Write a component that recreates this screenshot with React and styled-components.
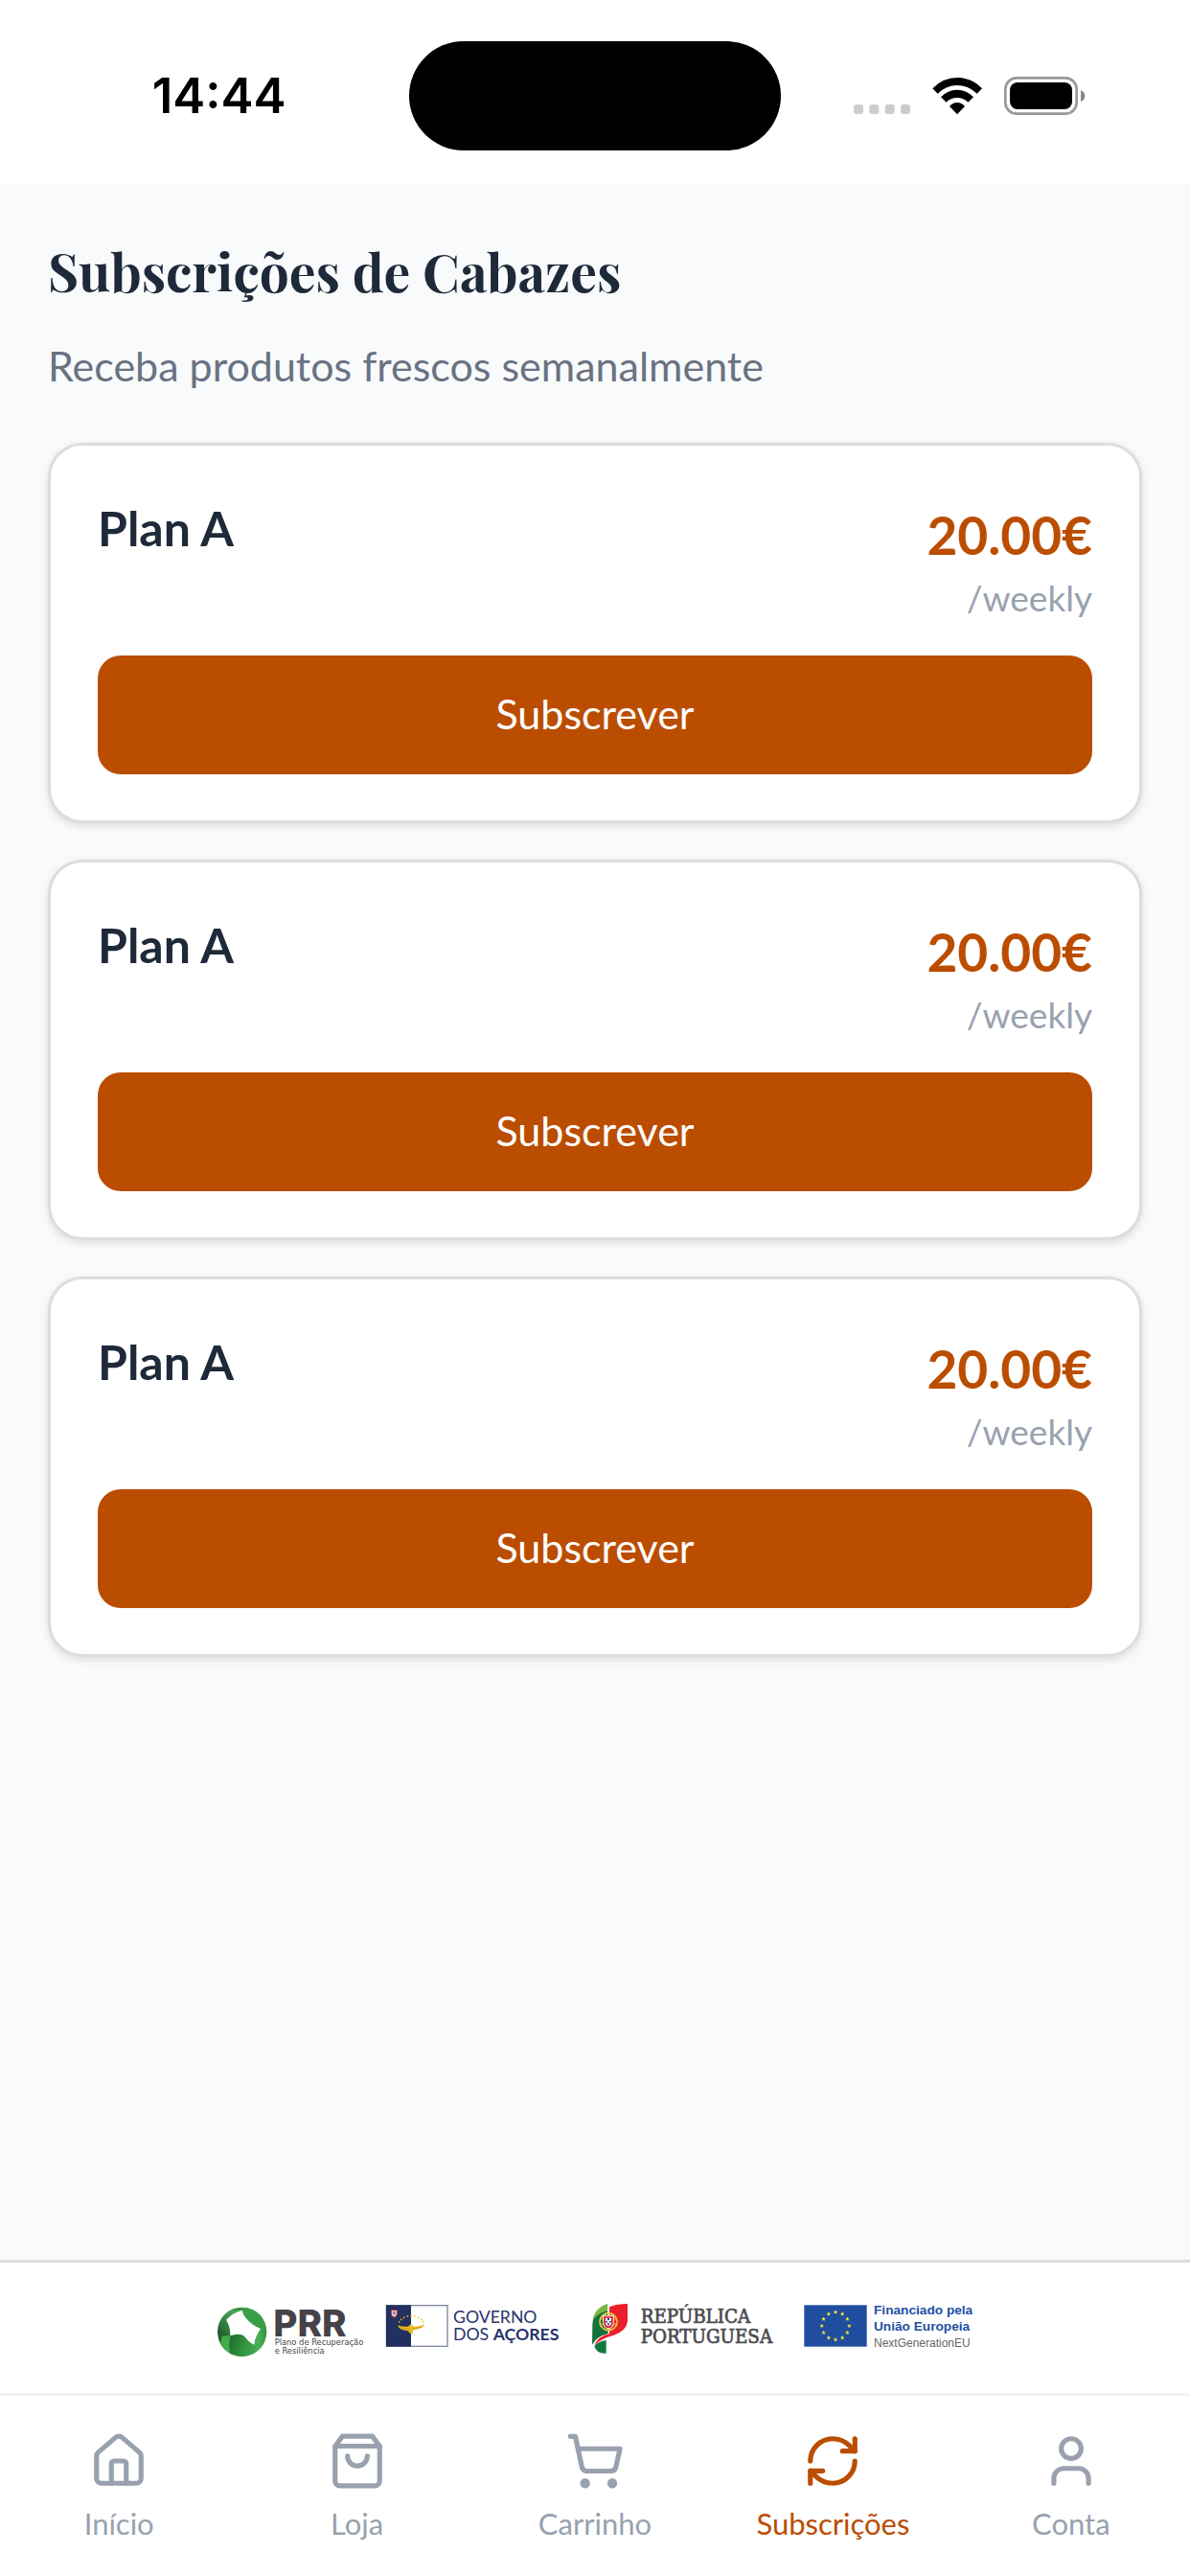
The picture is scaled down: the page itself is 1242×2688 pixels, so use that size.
import styled, { createGlobalStyle } from 'styled-components';
import { House, ShoppingCart, RefreshCw, User } from 'lucide-react';

const GlobalStyle = createGlobalStyle`
  :root {
    --font-body: Lato, "Liberation Sans", sans-serif;
    --font-heading: "Playfair Display", "Liberation Serif", serif;
    --accent: #bb4d00;
    --ink: #1e2939;
    --muted: #6a7282;
    --faint: #99a1af;
    --line: #e0dcda;
    --page-bg: #f9fafc;
  }

  * {
    box-sizing: border-box;
  }

  body {
    margin: 0;
    background: var(--page-bg);
    font-family: var(--font-body);
  }
`;

const Screen = styled.div`
  min-height: 100vh;
  display: flex;
  flex-direction: column;
`;

const StatusBar = styled.header`
  display: grid;
  grid-template-columns: 1fr 388px 1fr;
  align-items: center;
  height: 191px;
  padding-top: 8px;
  background: #fff;
`;

const Clock = styled.time`
  padding-left: 30px;
  text-align: center;
  font-family: Inter, sans-serif;
  font-size: 51px;
  font-weight: 600;
  color: #000;
`;

const Island = styled.div`
  height: 114px;
  border-radius: 57px;
  background: #000;
`;

const Indicators = styled.div`
  display: flex;
  justify-content: center;
  padding-right: 32px;
`;

const Main = styled.main`
  flex: 1;
  padding: 51px 50px 40px;
`;

const Title = styled.h1`
  margin: 0;
  font-family: var(--font-heading);
  font-size: 55px;
  line-height: 80px;
  font-weight: 700;
  color: var(--ink);
`;

const Subtitle = styled.p`
  margin: 28px 0 48px;
  font-size: 43px;
  line-height: 64px;
  color: var(--muted);
`;

const PlanList = styled.ul`
  display: flex;
  flex-direction: column;
  gap: 38px;
  margin: 0;
  padding: 0;
  list-style: none;
`;

const PlanCard = styled.li`
  padding: 48px 49px;
  border: 3px solid var(--line);
  border-radius: 36px;
  background: #fff;
  box-shadow: 0 3px 8px rgba(0, 0, 0, 0.12);
`;

const PlanHeader = styled.div`
  display: flex;
  justify-content: space-between;
  align-items: flex-start;
  margin-bottom: 34px;
`;

const PlanName = styled.h2`
  margin: 0;
  padding-top: 5px;
  font-size: 50px;
  line-height: 66px;
  font-weight: 700;
  color: var(--ink);
`;

const PlanPrice = styled.div`
  display: flex;
  flex-direction: column;
  align-items: flex-end;
  gap: 2px;
  padding-top: 7px;
`;

const Amount = styled.span`
  font-size: 55px;
  line-height: 76px;
  font-weight: 700;
  color: var(--accent);
`;

const Period = styled.span`
  font-size: 37px;
  line-height: 52px;
  color: var(--faint);
`;

const SubscribeButton = styled.button`
  display: block;
  width: 100%;
  height: 124px;
  padding: 0 0 4px;
  border: none;
  border-radius: 24px;
  background: var(--accent);
  font-family: inherit;
  font-size: 43px;
  color: #fff;
  cursor: pointer;
`;

const Sponsors = styled.section`
  display: flex;
  justify-content: center;
  flex-wrap: wrap;
  gap: 16px;
  padding: 38px 0;
  border-top: 3px solid var(--line);
  background: #fff;
`;

const Logo = styled.svg`
  display: block;
  height: 60px;
`;

const TabBar = styled.nav`
  display: flex;
  height: 191px;
  padding-top: 37px;
  border-top: 3px solid #f3f3f4;
  background: #fff;
`;

const Tab = styled.a`
  flex: 1;
  display: flex;
  flex-direction: column;
  align-items: center;
  gap: 14px;
  font-size: 31px;
  line-height: 40px;
  text-decoration: none;
  color: ${({ $active }) => ($active ? 'var(--accent)' : 'var(--faint)')};
`;

const plans = [
  { id: 1, name: 'Plan A', price: '20.00€', period: '/weekly' },
  { id: 2, name: 'Plan A', price: '20.00€', period: '/weekly' },
  { id: 3, name: 'Plan A', price: '20.00€', period: '/weekly' },
];

const ShoppingBag = ({ size }) => (
  <svg
    width={size}
    height={size}
    viewBox="0 0 24 24"
    fill="none"
    stroke="currentColor"
    strokeWidth="2"
    strokeLinecap="round"
    strokeLinejoin="round"
  >
    <path d="M6 2 3 6v14a2 2 0 0 0 2 2h14a2 2 0 0 0 2-2V6l-3-4Z" />
    <path d="M3 6h18" />
    <path d="M16 10a4 4 0 0 1-8 0" />
  </svg>
);

const tabs = [
  { label: 'Início', icon: House },
  { label: 'Loja', icon: ShoppingBag },
  { label: 'Carrinho', icon: ShoppingCart },
  { label: 'Subscrições', icon: RefreshCw, active: true },
  { label: 'Conta', icon: User },
];

const StatusIcons = () => (
  <svg width="246" height="42" viewBox="24 57 738 126" aria-hidden="true">
    {[27, 76, 125, 174].map((x) => (
      <rect key={x} x={x} y="147" width="30" height="30" rx="9" fill="#ccc" />
    ))}
    <path d="M274 97Q306 63 351 63T429 97L413 113Q385 87 351 87T290 113Z" />
    <path d="M300 124Q321 101 351 101T402 124L385 140Q371 126 351 126T317 140Z" />
    <path d="M327 153Q337 141 351 141T375 153L351 178Z" />
    <rect x="502" y="64" width="223" height="112" rx="35" fill="none" stroke="#999" strokeWidth="8" />
    <rect x="516" y="78" width="195" height="84" rx="24" />
    <path d="M738 102Q751 108 751 120T738 138Z" fill="#888" />
  </svg>
);

// points of a five-pointed star centred on cx, cy
const starPoints = (cx, cy, r) =>
  Array.from({ length: 10 }, (_, i) => {
    const radius = i % 2 ? r * 0.45 : r;
    const angle = (Math.PI / 5) * i - Math.PI / 2;
    return `${cx + radius * Math.cos(angle)},${cy + radius * Math.sin(angle)}`;
  }).join(' ');

const PrrLogo = () => (
  <Logo width="156" viewBox="51 147 468 180" role="img" aria-label="PRR">
    <defs>
      <linearGradient id="prrDisc" x1="0" y1="0.5" x2="1" y2="0.4">
        <stop offset="0" stopColor="#1f5a2a" />
        <stop offset="0.45" stopColor="#2f8a3c" />
        <stop offset="0.8" stopColor="#4cb058" />
        <stop offset="1" stopColor="#2f8f3f" />
      </linearGradient>
      <linearGradient id="prrLeaf" x1="0" y1="0" x2="1" y2="0.3">
        <stop offset="0" stopColor="#1e6b2b" />
        <stop offset="1" stopColor="#3da64a" />
      </linearGradient>
      <linearGradient id="prrTop" x1="0" y1="1" x2="1" y2="0">
        <stop offset="0" stopColor="#1e5f2a" />
        <stop offset="1" stopColor="#57b85f" />
      </linearGradient>
    </defs>
    <circle cx="128" cy="250" r="77" fill="url(#prrDisc)" />
    <path d="M54 236Q62 196 96 181L128 182Q96 190 78 212L92 262Q70 258 54 236Z" fill="url(#prrTop)" />
    <path d="M128 174Q180 176 198 220L203 242L184 240Q148 226 138 205Z" fill="#3a9e46" />
    <path d="M65 263L93 262Q84 290 93 319Q70 304 61 284Z" fill="#3fae4b" />
    <path d="M93 262Q118 250 135 264Q150 290 168 289Q155 316 128 327Q107 326 92 319Q84 288 93 262Z" fill="url(#prrLeaf)" />
    <path d="M78 212Q98 190 128 182Q131 196 141 208Q160 230 186 240Q168 264 166 290Q152 286 139 268Q126 250 91 262Q92 236 78 212Z" fill="#fff" />
    <text x="226" y="263" fontFamily="Inter, sans-serif" fontSize="116" fontWeight="800" fill="#454349">PRR</text>
    <g fontFamily='"DejaVu Sans", sans-serif' fontSize="25" fill="#454349">
      <text x="230" y="292">Plano de Recuperação</text>
      <text x="230" y="319">e Resiliência</text>
    </g>
  </Logo>
);

const AzoresLogo = () => (
  <Logo width="196" viewBox="27 147 588 180" role="img" aria-label="Governo dos Açores">
    <rect x="40" y="167" width="191" height="128" fill="#fff" stroke="#7d86a5" strokeWidth="4" />
    <rect x="39" y="166" width="78" height="130" fill="#22305f" />
    <path d="M55 182H73V194Q73 201 64 204Q55 201 55 194Z" fill="#e8dcdf" stroke="#c4343a" strokeWidth="3" />
    <rect x="61" y="186" width="6" height="10" fill="#5b6ea8" />
    {[[80, 219], [86, 211], [95, 205], [106, 201], [117, 200], [129, 201], [140, 205], [149, 211], [155, 219]].map(
      ([x, y]) => (
        <polygon key={x} points={starPoints(x, y, 4)} fill="#f0c020" />
      )
    )}
    <path
      d="M75 229Q90 235 108 233L116 226L125 233Q145 234 160 226Q154 240 128 243L122 247L123 255H114L108 247Q80 245 75 229Z"
      fill="#edb91c"
    />
    <path d="M80 236Q98 242 114 240M122 240Q140 240 153 233" fill="none" stroke="#c98f10" strokeWidth="2" />
    <g fontFamily="Lato, sans-serif" fontSize="53" fill="#27336a">
      <text x="249" y="223">GOVERNO</text>
      <text x="249" y="276">
        DOS <tspan fontWeight="700">AÇORES</tspan>
      </text>
    </g>
  </Logo>
);

const RepublicLogo = () => (
  <Logo width="204" viewBox="33 147 612 180" role="img" aria-label="República Portuguesa">
    <path d="M104 162Q58 176 55 226L54 290Q70 262 104 256Z" fill="#16713d" />
    <path d="M104 162Q62 174 57 212Q76 188 104 184Z" fill="#79b943" />
    <path d="M108 172Q132 162 165 162V216Q162 246 122 260Q78 272 61 292Q72 264 108 256Z" fill="#ea1f2b" />
    <path d="M61 294Q72 280 98 276V317Q66 318 61 294Z" fill="#0f7a40" />
    <circle cx="105" cy="218" r="27" fill="none" stroke="#f0cf32" strokeWidth="5" />
    <ellipse cx="105" cy="218" rx="27" ry="12" fill="none" stroke="#d9b52a" strokeWidth="3" />
    <path d="M84 196Q106 212 128 240M84 240Q104 222 128 196" fill="none" stroke="#8a7424" strokeWidth="2" />
    <path d="M89 199H121V221Q121 236 105 240Q89 236 89 221Z" fill="#e32530" stroke="#fff" strokeWidth="3" />
    <path d="M96 206H114V221Q114 229 105 232Q96 229 96 221Z" fill="#fff" />
    <path d="M102 207H108V213H102ZM97 215H102V221H97ZM108 215H113V221H108ZM102 223H108V229H102Z" fill="#2a4c8f" />
    <path d="M104 162V192" stroke="#fff" strokeWidth="3" />
    <g
      fontFamily='"DejaVu Serif Condensed", "DejaVu Serif", serif'
      fontSize="61"
      fill="#4b4a4f"
      stroke="#4b4a4f"
      strokeWidth="2"
    >
      <text x="206" y="222">REPÚBLICA</text>
      <text x="206" y="285">PORTUGUESA</text>
    </g>
  </Logo>
);

const EuropeLogo = () => (
  <Logo width="184" viewBox="33 147 552 180" role="img" aria-label="Financiado pela União Europeia">
    <rect x="58" y="166" width="196" height="130" fill="#1f4e9f" />
    {Array.from({ length: 12 }, (_, i) => {
      const angle = (Math.PI / 6) * i;
      return (
        <polygon
          key={i}
          points={starPoints(156 + 43 * Math.sin(angle), 231 - 43 * Math.cos(angle), 7)}
          fill="#f3e63a"
        />
      );
    })}
    <g fontFamily='"Liberation Sans", sans-serif' fontSize="41" fontWeight="700" fill="#2350a5">
      <text x="276" y="196">Financiado pela</text>
      <text x="276" y="245">União Europeia</text>
    </g>
    <text x="276" y="297" fontFamily='"Liberation Sans", sans-serif' fontSize="36" fill="#66666a">
      NextGenerationEU
    </text>
  </Logo>
);

const Plan = ({ name, price, period }) => (
  <PlanCard>
    <PlanHeader>
      <PlanName>{name}</PlanName>
      <PlanPrice>
        <Amount>{price}</Amount>
        <Period>{period}</Period>
      </PlanPrice>
    </PlanHeader>
    <SubscribeButton type="button">Subscrever</SubscribeButton>
  </PlanCard>
);

const App = () => (
  <>
    <GlobalStyle />
    <Screen>
      <StatusBar>
        <Clock>14:44</Clock>
        <Island />
        <Indicators>
          <StatusIcons />
        </Indicators>
      </StatusBar>

      <Main>
        <Title>Subscrições de Cabazes</Title>
        <Subtitle>Receba produtos frescos semanalmente</Subtitle>
        <PlanList>
          {plans.map((plan) => (
            <Plan key={plan.id} {...plan} />
          ))}
        </PlanList>
      </Main>

      <Sponsors>
        <PrrLogo />
        <AzoresLogo />
        <RepublicLogo />
        <EuropeLogo />
      </Sponsors>

      <TabBar>
        {tabs.map(({ label, icon: Icon, active }) => (
          <Tab key={label} href="#" $active={active} aria-current={active ? 'page' : undefined}>
            <Icon size={62} />
            {label}
          </Tab>
        ))}
      </TabBar>
    </Screen>
  </>
);

export default App;
